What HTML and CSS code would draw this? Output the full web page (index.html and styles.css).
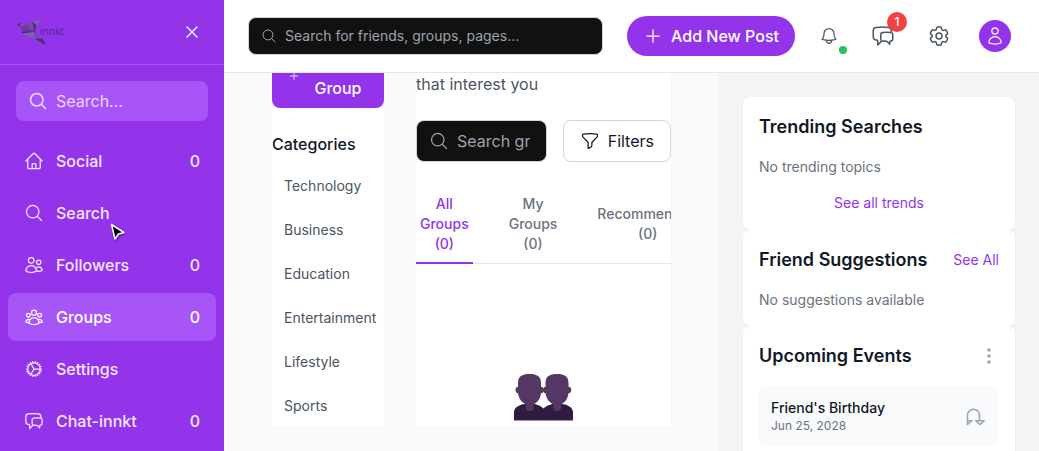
FILE: index.html
```html
<!DOCTYPE html>
<html lang="en">
<head>
<meta charset="utf-8">
<title>innkt - Groups</title>
<link rel="stylesheet" href="styles.css">
</head>
<body>
<svg width="0" height="0" class="sprite" aria-hidden="true">
  <symbol id="search" viewBox="0 0 24 24"><path d="m21 21-5.197-5.197m0 0A7.5 7.5 0 1 0 5.196 5.196a7.5 7.5 0 0 0 10.607 10.607Z"/></symbol>
  <symbol id="plus" viewBox="0 0 24 24"><path d="M12 4.5v15m7.5-7.5h-15"/></symbol>
  <symbol id="close" viewBox="0 0 24 24"><path d="M6 18 18 6M6 6l12 12"/></symbol>
  <symbol id="home" viewBox="0 0 24 24"><path d="m2.25 12 8.954-8.955c.44-.439 1.152-.439 1.591 0L21.75 12M4.5 9.75v10.125c0 .621.504 1.125 1.125 1.125H9.75v-4.875c0-.621.504-1.125 1.125-1.125h2.250c.621 0 1.125.504 1.125 1.125V21h4.125c.621 0 1.125-.504 1.125-1.125V9.75M8.250 21h8.250"/></symbol>
  <symbol id="group" viewBox="0 0 24 24"><path d="M18 18.72a9.094 9.094 0 0 0 3.741-.479 3 3 0 0 0-4.682-2.72m.94 3.198.001.031c0 .225-.012.447-.037.666A11.944 11.944 0 0 1 12 21c-2.17 0-4.207-.576-5.963-1.584A6.062 6.062 0 0 1 6 18.719m12 0a5.971 5.971 0 0 0-.941-3.197m0 0A5.995 5.995 0 0 0 12 12.75a5.995 5.995 0 0 0-5.058 2.772m0 0a3 3 0 0 0-4.681 2.72 8.986 8.986 0 0 0 3.74.477m.94-3.197a5.971 5.971 0 0 0-.94 3.197M15 6.75a3 3 0 1 1-6 0 3 3 0 0 1 6 0Zm6 3a2.25 2.25 0 1 1-4.5 0 2.25 2.25 0 0 1 4.5 0Zm-13.5 0a2.25 2.25 0 1 1-4.5 0 2.25 2.25 0 0 1 4.5 0Z"/></symbol>
  <symbol id="cog8" viewBox="0 0 24 24"><path d="M4.5 12a7.5 7.5 0 0 0 15 0m-15 0a7.5 7.5 0 1 1 15 0m-15 0H3m16.5 0H21m-1.5 0H12m-8.457 3.077 1.41-.513m14.095-5.13 1.41-.513M5.106 17.785l1.15-.964m11.49-9.642 1.149-.964M7.501 19.795l.75-1.3m7.5-12.99.75-1.3m-6.063 16.658.26-1.477m2.605-14.772.26-1.477m0 17.726-.26-1.477M10.698 4.614l-.26-1.477M16.5 19.794l-.75-1.299M7.5 4.205 12 12m6.894 5.785-1.149-.964M6.256 7.178l-1.15-.964m15.352 8.864-1.41-.513M4.954 9.435l-1.41-.514M12.002 12l-3.75 6.495"/></symbol>
  <symbol id="chat" viewBox="0 0 24 24"><path d="M20.25 8.511c.884.284 1.5 1.128 1.5 2.097v4.286c0 1.136-.847 2.1-1.98 2.193-.34.027-.68.052-1.02.072v3.091l-3-3c-1.354 0-2.694-.055-4.02-.163a2.115 2.115 0 0 1-.825-.242m9.345-8.334a2.126 2.126 0 0 0-.476-.095 48.64 48.64 0 0 0-8.048 0c-1.131.094-1.976 1.057-1.976 2.192v4.286c0 .837.46 1.58 1.155 1.951m9.345-8.334V6.637c0-1.621-1.152-3.026-2.76-3.235A48.455 48.455 0 0 0 11.25 3c-2.115 0-4.198.137-6.24.402-1.608.209-2.76 1.614-2.76 3.235v6.226c0 1.621 1.152 3.026 2.76 3.235.577.075 1.157.14 1.74.194V21l4.155-4.155"/></symbol>
  <symbol id="bell" viewBox="0 0 24 24"><path d="M14.857 17.082a23.848 23.848 0 0 0 5.454-1.31A8.967 8.967 0 0 1 18 9.75V9A6 6 0 0 0 6 9v.75a8.967 8.967 0 0 1-2.312 6.022c1.733.64 3.56 1.085 5.455 1.31m5.714 0a24.255 24.255 0 0 1-5.714 0m5.714 0a3 3 0 1 1-5.714 0"/></symbol>
  <symbol id="gear" viewBox="0 0 24 24"><path d="M9.594 3.94c.09-.542.56-.94 1.11-.94h2.593c.55 0 1.02.398 1.11.94l.213 1.281c.063.374.313.686.645.87.074.04.147.083.22.127.325.196.72.257 1.075.124l1.217-.456a1.125 1.125 0 0 1 1.37.49l1.296 2.247a1.125 1.125 0 0 1-.26 1.431l-1.003.827c-.293.241-.438.613-.43.992a7.723 7.723 0 0 1 0 .255c-.008.378.137.75.43.991l1.004.827c.424.35.534.955.26 1.43l-1.298 2.247a1.125 1.125 0 0 1-1.369.491l-1.217-.456c-.355-.133-.75-.072-1.076.124a6.47 6.47 0 0 1-.22.128c-.331.183-.581.495-.644.869l-.213 1.281c-.09.543-.56.94-1.11.94h-2.594c-.55 0-1.019-.398-1.11-.94l-.213-1.281c-.062-.374-.312-.686-.644-.87a6.52 6.52 0 0 1-.22-.127c-.325-.196-.72-.257-1.076-.124l-1.217.456a1.125 1.125 0 0 1-1.369-.49l-1.297-2.247a1.125 1.125 0 0 1 .26-1.431l1.004-.827c.292-.24.437-.613.43-.991a6.932 6.932 0 0 1 0-.255c.007-.38-.138-.751-.43-.992l-1.004-.827a1.125 1.125 0 0 1-.26-1.43l1.297-2.247a1.125 1.125 0 0 1 1.37-.491l1.216.456c.356.133.751.072 1.076-.124.072-.044.146-.086.22-.128.332-.183.582-.495.644-.869l.214-1.28Z M15 12a3 3 0 1 1-6 0 3 3 0 0 1 6 0Z"/></symbol>
  <symbol id="user" viewBox="0 0 24 24"><path d="M15.75 6a3.75 3.75 0 1 1-7.5 0 3.75 3.75 0 0 1 7.5 0ZM4.501 20.118a7.5 7.5 0 0 1 14.998 0A17.933 17.933 0 0 1 12 21.75c-2.676 0-5.216-.584-7.499-1.632Z"/></symbol>
  <symbol id="friends" viewBox="0 0 24 24"><path d="M15 19.128a9.38 9.38 0 0 0 2.625.372 9.337 9.337 0 0 0 4.121-.952 4.125 4.125 0 0 0-7.533-2.493M15 19.128v-.003c0-1.113-.285-2.16-.786-3.07M15 19.128v.106A12.318 12.318 0 0 1 8.624 21c-2.331 0-4.512-.645-6.374-1.766l-.001-.109a6.375 6.375 0 0 1 11.964-3.07M12 6.375a3.375 3.375 0 1 1-6.75 0 3.375 3.375 0 0 1 6.75 0Zm8.25 2.25a2.625 2.625 0 1 1-5.25 0 2.625 2.625 0 0 1 5.25 0Z"/></symbol>
  <symbol id="funnel" viewBox="0 0 24 24"><path d="M12 3c2.755 0 5.455.232 8.083.678.533.09.917.556.917 1.096v1.044a2.25 2.25 0 0 1-.659 1.591l-5.432 5.432a2.25 2.250 0 0 0-.659 1.591v2.927a2.25 2.25 0 0 1-1.244 2.013L9.750 21v-6.568a2.25 2.25 0 0 0-.659-1.591L3.659 7.409A2.250 2.250 0 0 1 3 5.818V4.774c0-.54.384-1.006.917-1.096A48.32 48.32 0 0 1 12 3Z"/></symbol>
</svg>

<div class="app">
  <aside class="sidebar">
    <div class="brand-row">
      <a class="brand" href="#">
        <svg width="32" height="28" viewBox="0 0 32 28" aria-hidden="true">
          <path fill="#7f60b0" d="M15.500 4 26.500 1 20.500 8 19 5.500Z"/>
          <path fill="#4d2b78" d="M.7 6 4.500 5 5 9.500Z"/>
          <path fill="#7b5ab0" d="M4.500 5 9 9.500 6 13 4.500 9Z"/>
          <path fill="#693c9c" d="M4.500 9 16 3.500 19 14 6 14.500Z"/>
          <path fill="#7548ac" d="m10 6.500 6-3 2.500 3-2 7Z"/>
          <path fill="#4d2b78" d="m16 3.500 4.500 4-2 6.500-1-6Z"/>
          <path fill="#4d2b78" d="m5.500 14 13-1v1.500l-12.500 1Z"/>
          <path fill="#7f60b0" d="m6 15.500 12-1.500 1.500 7Z"/>
          <path fill="#7248a8" d="m18 14 8.500 7-7 .3Z"/>
          <path fill="#4d2b78" d="m19 21 7.500-.5L30 27Z"/>
        </svg>
        <span>innkt</span>
      </a>
      <button class="plain close" aria-label="Close menu"><svg class="i20"><use href="#close"/></svg></button>
    </div>
    <label class="side-search">
      <svg class="i20"><use href="#search"/></svg>
      <input type="text" placeholder="Search..." aria-label="Search">
    </label>
    <nav class="side-nav">
      <a href="#"><svg class="i20"><use href="#home"/></svg><span>Social</span><b>0</b></a>
      <a href="#"><svg class="i20"><use href="#search"/></svg><span>Search</span></a>
      <a href="#"><svg class="i20"><use href="#friends"/></svg><span>Followers</span><b>0</b></a>
      <a href="#" class="active"><svg class="i20"><use href="#group"/></svg><span>Groups</span><b>0</b></a>
      <a href="#"><svg class="i20"><use href="#cog8"/></svg><span>Settings</span></a>
      <a href="#"><svg class="i20"><use href="#chat"/></svg><span>Chat-innkt</span><b>0</b></a>
    </nav>
  </aside>

  <div class="page">
    <header class="topbar">
      <label class="field top-search">
        <svg class="i16"><use href="#search"/></svg>
        <input type="text" placeholder="Search for friends, groups, pages..." aria-label="Search for friends, groups, pages">
      </label>
      <div class="actions">
        <button class="post"><svg class="i20"><use href="#plus"/></svg>Add New Post</button>
        <button class="plain bell" aria-label="Notifications"><svg class="i20"><use href="#bell"/></svg><i class="dot"></i></button>
        <button class="plain tool" aria-label="Messages"><svg class="i24"><use href="#chat"/></svg><em class="badge">1</em></button>
        <button class="plain tool" aria-label="Settings"><svg class="i24"><use href="#gear"/></svg></button>
        <button class="plain account" aria-label="Account"><span class="avatar"><svg class="i20"><use href="#user"/></svg></span></button>
      </div>
    </header>

    <div class="body">
      <main class="content">
        <section class="panel categories">
          <button class="create"><svg class="i12"><use href="#plus"/></svg><span>Create Group</span></button>
          <h3>Categories</h3>
          <ul>
            <li><button>Technology</button></li>
            <li><button>Business</button></li>
            <li><button>Education</button></li>
            <li><button>Entertainment</button></li>
            <li><button>Lifestyle</button></li>
            <li><button>Sports</button></li>
          </ul>
        </section>
        <section class="panel groups">
          <p>that interest you</p>
          <div class="filter-row">
            <label class="field group-search">
              <svg class="i20"><use href="#search"/></svg>
              <input type="text" placeholder="Search groups..." aria-label="Search groups">
            </label>
            <button class="filters"><svg class="i20"><use href="#funnel"/></svg>Filters</button>
          </div>
          <div class="tabs">
            <button class="current">All Groups (0)</button>
            <button>My Groups (0)</button>
            <button>Recommended (0)</button>
          </div>
          <div class="empty">
            <svg width="60" height="47" viewBox="0 0 60 47" aria-hidden="true">
              <path fill="#321b41" d="M0 47V38c0-5 7-8.500 15.500-8.500 6 0 11 2 14 5 3-3 8-5 14-5C52 29.500 59 33 59 38v9Z"/>
              <path fill="#a58caf" d="M0 46h59v1H0Z"/>
              <g fill="#543764">
                <path id="head" d="M4 9C4 2.500 8 0 15.500 0S27 2.500 27 9v3.700c1.800 0 2.800 1.300 2.800 3.200s-1 3.300-2.800 3.300c-.8 5.500-3.500 9.300-7.300 10.800V33a4 4 0 0 1-8 0v-3C7.900 28.500 4.800 24.700 4 19.200c-1.500 0-2.500-1.400-2.500-3.300S2.500 12.700 4 12.700Z"/>
                <use href="#head" x="27.500"/>
              </g>
            </svg>
          </div>
        </section>
      </main>

      <aside class="rail">
        <section class="card">
          <div class="card-head"><h2>Trending Searches</h2></div>
          <p>No trending topics</p>
          <button class="link all">See all trends</button>
        </section>
        <section class="card">
          <div class="card-head"><h2>Friend Suggestions</h2><button class="link">See All</button></div>
          <p>No suggestions available</p>
        </section>
        <section class="card">
          <div class="card-head"><h2>Upcoming Events</h2>
            <button class="plain more" aria-label="More"><svg width="20" height="20" viewBox="0 0 20 20"><g fill="#9ca3af" stroke="none"><circle cx="10" cy="4" r="1.800"/><circle cx="10" cy="10" r="1.800"/><circle cx="10" cy="16" r="1.800"/></g></svg></button>
          </div>
          <div class="event">
            <div><h4>Friend's Birthday</h4><span>Jun 25, 2028</span></div>
            <button class="plain remind" aria-label="Reminder"><svg width="24" height="20" viewBox="0 0 24 20"><path d="M4.500 18.500V9.300a6 6 0 0 1 12 0v5.400M4.500 14.700h4.300L4.500 18.500M12.800 14.700h8.400l-4.200 3.800Z"/></svg></button>
          </div>
        </section>
      </aside>
    </div>
  </div>
</div>
<svg class="pointer" width="16" height="20" viewBox="0 0 16 20" aria-hidden="true"><path d="M1.500 1.500 14 9.500 8.500 11 5 16Z"/></svg>
</body>
</html>
```

FILE: styles.css
```css
* { box-sizing: border-box; margin: 0; padding: 0; }
body { font: 16px/24px Inter, "Liberation Sans", sans-serif; color: #111827; }
button, input { font: inherit; color: inherit; background: none; border: 0; }
a { color: inherit; text-decoration: none; }
ul { list-style: none; }
svg { display: block; flex: none; fill: none; stroke: currentColor; stroke-width: 1.5; stroke-linecap: round; stroke-linejoin: round; }
.sprite { position: absolute; }
.i12 { width: 12px; height: 12px; }
.i16 { width: 16px; height: 16px; }
.i20 { width: 20px; height: 20px; }
.i24 { width: 24px; height: 24px; }
.plain { display: flex; align-items: center; justify-content: center; }

.app { display: flex; height: 100vh; overflow: hidden; }

.sidebar { flex: none; width: 224px; background: #9333ea; color: #f3e8ff; overflow: hidden; }
.brand-row { display: flex; align-items: center; justify-content: space-between; height: 65px; padding: 0 16px; border-bottom: 1px solid #a855f7; }
.brand { display: flex; align-items: center; color: #59258f; font: 10px/16px "Noto Sans", sans-serif; }
.brand svg { stroke: none; margin-right: -8px; }
.brand span { padding-bottom: 2px; }
.close { width: 32px; height: 32px; color: #fff; }
.side-search { display: flex; align-items: center; gap: 8px; height: 40px; margin: 16px; padding: 0 12px; border-radius: 8px; background: #a855f7; color: #e9d5ff; }
.side-search svg { stroke-width: 2; }
.side-search input { flex: 1; min-width: 0; }
.side-nav { display: flex; flex-direction: column; gap: 4px; padding: 0 8px; }
.side-nav a { display: flex; align-items: center; gap: 12px; height: 48px; padding: 0 16px; border-radius: 8px; font-weight: 500; }
.side-nav span { flex: 1; }
.side-nav b { font-weight: 500; }
.side-nav .active { background: #a855f7; color: #fff; }
input::placeholder { color: inherit; opacity: 1; }

.page { flex: 1; min-width: 0; display: flex; flex-direction: column; }
.topbar { position: relative; z-index: 1; flex: none; display: flex; align-items: center; gap: 24px; padding: 16px 24px; background: #fff; border-bottom: 1px solid #e5e7eb; }
.field { display: flex; align-items: center; background: #111; border: 1px solid #d1d5db; border-radius: 8px; color: #9ca3af; }
.field input { flex: 1; min-width: 0; width: 0; }
.top-search { flex: 1; gap: 8px; height: 38px; padding: 0 12px; font-size: 14px; }
.actions { display: flex; align-items: center; gap: 16px; color: #4b5563; }
.post { display: flex; align-items: center; gap: 8px; height: 40px; padding: 0 16px; border-radius: 20px; background: #9333ea; color: #fff; font-weight: 500; white-space: nowrap; }
.bell { position: relative; width: 36px; height: 36px; }
.dot { position: absolute; right: 0; bottom: 0; width: 8px; height: 8px; border-radius: 50%; background: #22c55e; }
.tool, .account { position: relative; width: 40px; height: 40px; }
.badge { position: absolute; top: -4px; right: -4px; width: 20px; height: 20px; border-radius: 50%; background: #ef4444; color: #fff; font: 500 12px/20px Inter, sans-serif; text-align: center; }
.avatar { display: flex; align-items: center; justify-content: center; width: 32px; height: 32px; border-radius: 50%; background: #9333ea; color: #fff; }

.body { flex: 1; min-height: 0; display: flex; background: #f9fafb; }
.content { flex: 1; min-width: 0; display: flex; gap: 32px; padding: 0 48px 24px; }
.panel { background: #fff; overflow: hidden; box-shadow: 0 0 1px #e5e7eb; }
.categories { flex: none; width: 112px; }
.create { display: flex; align-items: center; gap: 8px; width: 100%; margin-top: -29px; padding: 8px 16px; border-radius: 8px; background: #9333ea; color: #fff; font-weight: 500; }
.create span { flex: 1; }
.categories h3 { margin: 24px 0 12px; font-size: 16px; font-weight: 500; }
.categories ul { display: flex; flex-direction: column; gap: 8px; }
.categories li button { padding: 8px 12px; font-size: 14px; line-height: 20px; color: #4b5563; white-space: nowrap; }
.groups { flex: 1; min-width: 0; }
.groups p { margin: -1px 0 24px; color: #4b5563; }
.filter-row { display: flex; gap: 16px; }
.group-search { flex: 1; gap: 8px; padding: 0 16px 0 12px; }
.filters { display: flex; align-items: center; gap: 8px; height: 42px; padding: 0 16px; border: 1px solid #d1d5db; border-radius: 8px; }
.tabs { display: flex; gap: 32px; margin-top: 24px; box-shadow: inset 0 -1px #e5e7eb; }
.tabs button { padding: 8px 4px; border-bottom: 2px solid transparent; font-size: 14px; line-height: 20px; font-weight: 500; color: #6b7280; }
.tabs .current { color: #9333ea; border-color: #9333ea; }
.empty { display: flex; justify-content: center; padding-top: 110px; }
.empty svg { stroke: none; }

.rail { flex: none; width: 320px; padding: 24px; background: #f3f4f6; overflow: hidden; }
.card { padding: 16px; background: #fff; border-radius: 8px; box-shadow: 0 1px 2px rgba(0, 0, 0, .05); font-size: 14px; line-height: 20px; }
.card-head { display: flex; align-items: center; justify-content: space-between; margin-bottom: 16px; }
.card h2 { font-size: 18px; line-height: 28px; font-weight: 600; }
.card p { color: #6b7280; }
.link { color: #9333ea; }
.all { display: block; width: 100%; margin-top: 16px; padding-bottom: 1px; }
.event { display: flex; align-items: center; justify-content: space-between; padding: 12px; border-radius: 8px; background: #f9fafb; }
.event h4 { font-size: 14px; font-weight: 500; }
.event span { display: block; font-size: 12px; line-height: 16px; color: #6b7280; }
.remind { color: #9ca3af; }

.pointer { position: absolute; left: 110px; top: 223px; fill: #000; stroke: #fff; filter: drop-shadow(1px 1px 1px rgba(0, 0, 0, .4)); }
```
